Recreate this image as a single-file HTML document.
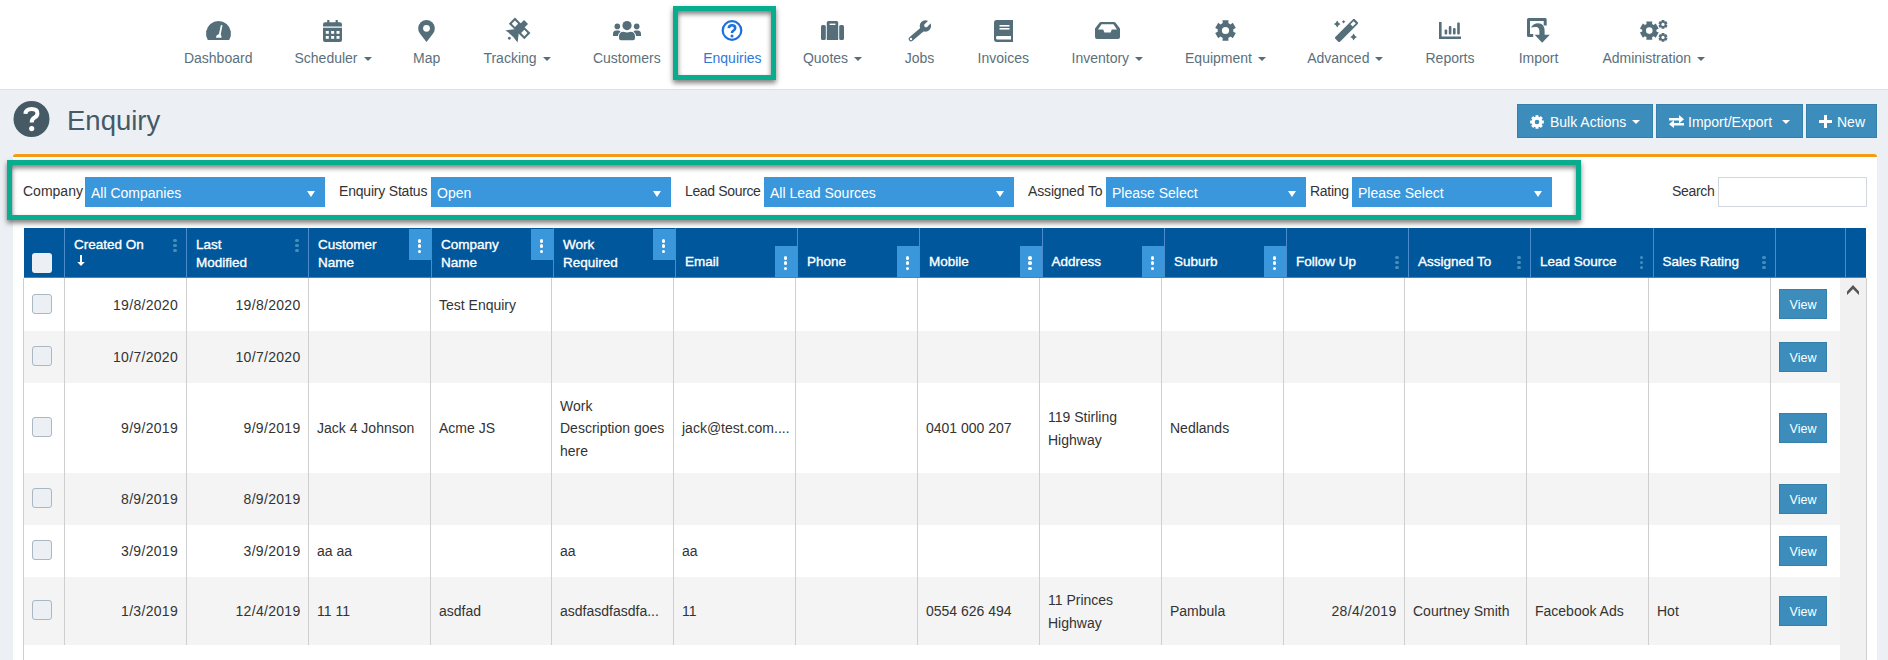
<!DOCTYPE html><html><head><meta charset="utf-8"><style>
*{box-sizing:border-box;margin:0;padding:0}
html,body{width:1888px;height:660px;overflow:hidden;background:#ecf0f5;font-family:"Liberation Sans",sans-serif;color:#333}
.a{position:absolute}
.nav{position:absolute;left:0;top:0;width:1888px;height:90px;background:#fff;border-bottom:1px solid #dde1e6}
.ni{position:absolute;top:0;width:160px;height:89px;text-align:center}
.ni svg{position:absolute}
svg{overflow:visible}
.nl{position:absolute;left:0;width:160px;top:50px;line-height:16px;font-size:14px;color:#5b707c;text-align:center;white-space:nowrap}
.caret{display:inline-block;width:0;height:0;border-left:4px solid transparent;border-right:4px solid transparent;border-top:4px solid #546e7a;vertical-align:2px;margin-left:6px}
.btn{position:absolute;top:104px;height:34px;background:#3c8dbc;border:1px solid #367fa9;color:#fff;font-size:14px;line-height:34px;white-space:nowrap}
.lbl{position:absolute;font-size:14px;color:#333;line-height:16px;top:183px;white-space:nowrap}
.sel{position:absolute;top:177px;height:30px;background:#3a97dc;color:#fff;font-size:14px;line-height:33px;padding-left:6px;white-space:nowrap}
.sel i{position:absolute;right:10px;top:14px;width:0;height:0;border-left:4px solid transparent;border-right:4px solid transparent;border-top:6px solid #fff}
.th{position:absolute;top:228px;height:49px;color:#fff;font-size:13.5px;font-weight:400;-webkit-text-stroke:0.35px #fff;line-height:18px;white-space:nowrap}
.hd{position:absolute;top:228px;width:1px;height:49px;background:#4d8ccc}
.kb{position:absolute;width:22px;height:31px;background:#3a97dc}
.dot{position:absolute;width:3.7px;height:3.7px;border-radius:50%;background:#fff}
.dd{background:#4590ba;width:3.4px;height:3.4px}
.row{position:absolute;left:24px;width:1816px}
.bd{position:absolute;width:1px;background:#cfcfcf;top:278px;height:367px}
.td{position:absolute;font-size:14px;color:#333;line-height:22.4px;white-space:nowrap}
.r{text-align:right}
.cb{position:absolute;left:32px;width:20px;height:20px;border:1px solid #a9b8c2;border-radius:3px;background:#eceff3}
.vb{position:absolute;left:1779px;width:48px;height:30px;background:#3c8dbc;border:1px solid #367fa9;color:#fff;font-size:12.5px;line-height:30px;text-align:center}
</style></head><body>
<div class="nav"></div>
<svg class="a" style="left:206px;top:21px" width="25" height="19" viewBox="0 0 25 19"><path fill="#546e7a" d="M1.82,19 A12.5,12.5 0 1 1 23.18,19 Z"/><path fill="#fff" d="M14.9,4 L16.5,4.3 L14.7,13.4 Q15.7,14.5 15.5,16.8 L10.1,16.8 Q9.8,14.2 12.9,13 Z"/></svg>
<div class="nl" style="left:138.2px">Dashboard</div>
<svg class="a" style="left:323px;top:20px" width="19" height="22" viewBox="0 0 19 22"><path fill="#546e7a" d="M0,6.6 L0,4.5 Q0,2.3 2.2,2.3 L16.8,2.3 Q19,2.3 19,4.5 L19,6.6 Z"/><path fill="#546e7a" d="M0,7.7 L19,7.7 L19,20 Q19,22 17,22 L2,22 Q0,22 0,20 Z"/><rect x="4.2" y="0" width="2.2" height="3" fill="#546e7a"/><rect x="12.6" y="0" width="2.2" height="3" fill="#546e7a"/><rect x="2.80" y="11.0" width="3" height="2.8" fill="#fff"/><rect x="8.15" y="11.0" width="3" height="2.8" fill="#fff"/><rect x="13.50" y="11.0" width="3" height="2.8" fill="#fff"/><rect x="2.80" y="16.0" width="3" height="2.8" fill="#fff"/><rect x="8.15" y="16.0" width="3" height="2.8" fill="#fff"/><rect x="13.50" y="16.0" width="3" height="2.8" fill="#fff"/></svg>
<div class="nl" style="left:253px">Scheduler<span class="caret"></span></div>
<svg class="a" style="left:418px;top:20px" width="17" height="22" viewBox="0 0 17 22"><path fill="#546e7a" d="M8.5,22 L1.9,13.4 A8.3,8.3 0 1 1 15.1,13.4 Z"/><circle cx="8.5" cy="8.3" r="3.4" fill="#fff"/></svg>
<div class="nl" style="left:346.7px">Map</div>
<svg class="a" style="left:506px;top:20px" width="22" height="22" viewBox="0 0 22 22"><g transform="translate(11 11) rotate(45)"><rect x="-2.8" y="-12.8" width="5.6" height="13.2" fill="#546e7a"/><rect x="-9.9" y="-7" width="6.6" height="6.6" fill="none" stroke="#546e7a" stroke-width="2.1"/><rect x="3.3" y="-7" width="6.6" height="6.6" fill="none" stroke="#546e7a" stroke-width="2.1"/><path fill="#546e7a" d="M-2,-0.8 L2,-0.8 L8.6,7.8 Q0,5.8 -8.6,7.8 Z"/><circle cx="-0.3" cy="10.5" r="1.4" fill="#546e7a"/></g></svg>
<div class="nl" style="left:437px">Tracking<span class="caret"></span></div>
<svg class="a" style="left:613px;top:21px" width="28" height="19" viewBox="0 0 28 19"><circle cx="14" cy="4.6" r="4.6" fill="#546e7a"/><circle cx="4.3" cy="5.4" r="2.8" fill="#546e7a"/><circle cx="23.7" cy="5.4" r="2.8" fill="#546e7a"/><path fill="#546e7a" d="M8,19.2 Q6,19.2 6,17 L6,15.5 Q6,10.8 10.5,10.8 Q12.5,11.6 14,11.6 Q15.5,11.6 17.5,10.8 Q22,10.8 22,15.5 L22,17 Q22,19.2 20,19.2 Z"/><path fill="#546e7a" d="M0,15 L0,13 Q0,9.5 3,9.5 L6,9.5 Q7,9.8 7.5,10.6 Q5.2,12.5 5,15 Z"/><path fill="#546e7a" d="M28,15 L28,13 Q28,9.5 25,9.5 L22,9.5 Q21,9.8 20.5,10.6 Q22.8,12.5 23,15 Z"/></svg>
<div class="nl" style="left:546.8px">Customers</div>
<svg class="a" style="left:721px;top:20px" width="22" height="21" viewBox="0 0 22 21"><circle cx="11" cy="10.5" r="9.3" fill="none" stroke="#1b72dc" stroke-width="2.2"/><path fill="none" stroke="#1b72dc" stroke-width="2.6" d="M7.8,8.2 Q8,5.2 11,5.2 Q14.2,5.2 14.2,8 Q14.2,9.8 12.2,10.8 Q11,11.4 11,13"/><circle cx="11" cy="15.9" r="1.5" fill="#1b72dc"/></svg>
<div class="nl" style="left:652.4px;color:#3078d8">Enquiries</div>
<svg class="a" style="left:821px;top:21px" width="23" height="19" viewBox="0 0 23 19"><rect x="0" y="4" width="4.8" height="15" rx="1.6" fill="#546e7a"/><rect x="18.2" y="4" width="4.8" height="15" rx="1.6" fill="#546e7a"/><path fill="#546e7a" d="M5.8,19 L5.8,1.6 Q5.8,0 7.4,0 L15.6,0 Q17.2,0 17.2,1.6 L17.2,19 Z"/><rect x="8.6" y="2.6" width="5.8" height="1.4" fill="#fff"/></svg>
<div class="nl" style="left:752.5px">Quotes<span class="caret"></span></div>
<svg class="a" style="left:908px;top:20px" width="23" height="22" viewBox="0 0 23 22"><line x1="16.5" y1="7.5" x2="3" y2="19" stroke="#546e7a" stroke-width="4.8" stroke-linecap="round"/><circle cx="17.4" cy="6" r="5.7" fill="#546e7a"/><g transform="translate(18 5.4) rotate(-45)"><rect x="0" y="-1.8" width="8" height="3.6" fill="#fff"/><circle cx="0" cy="0" r="1.8" fill="#fff"/></g><circle cx="3" cy="19" r="1.2" fill="#fff"/></svg>
<div class="nl" style="left:839.5px">Jobs</div>
<svg class="a" style="left:994px;top:20px" width="19" height="22" viewBox="0 0 19 22"><path fill="#546e7a" d="M2.5,0 L19,0 L19,22 L2.5,22 Q0,22 0,19 L0,2.8 Q0,0 2.5,0 Z"/><rect x="5.5" y="5" width="10" height="1.6" fill="#fff"/><rect x="5.5" y="8" width="10" height="1.6" fill="#fff"/><path fill="#fff" d="M3,16 L17,16 L17,19.5 L3,19.5 Q2,19.5 2,17.8 Q2,16 3,16 Z"/></svg>
<div class="nl" style="left:923.3px">Invoices</div>
<svg class="a" style="left:1095px;top:22px" width="25" height="17" viewBox="0 0 25 17"><path fill="#546e7a" d="M6,0 L19,0 Q20,0 20.6,0.8 L25,6.4 L25,15 Q25,17 23,17 L2,17 Q0,17 0,15 L0,6.4 L4.4,0.8 Q5,0 6,0 Z"/><path fill="#fff" d="M6.6,2.2 L18.4,2.2 L22,7.6 L16.8,7.6 L15.6,10.4 L9.4,10.4 L8.2,7.6 L3,7.6 Z"/></svg>
<div class="nl" style="left:1027.3px">Inventory<span class="caret"></span></div>
<svg class="a" style="left:1215px;top:20px" width="21" height="21" viewBox="0 0 21 21"><path fill="#546e7a" d="M13.28,17.89 L13.51,20.66 L7.49,20.66 L7.72,17.89 L5.49,16.61 L3.20,18.19 L0.19,12.97 L2.71,11.79 L2.71,9.21 L0.19,8.03 L3.20,2.81 L5.49,4.39 L7.72,3.11 L7.49,0.34 L13.51,0.34 L13.28,3.11 L15.51,4.39 L17.80,2.81 L20.81,8.03 L18.29,9.21 L18.29,11.79 L20.81,12.97 L17.80,18.19 L15.51,16.61Z"/><circle cx="10.5" cy="10.5" r="3.6" fill="#fff"/></svg>
<div class="nl" style="left:1145.5px">Equipment<span class="caret"></span></div>
<svg class="a" style="left:1334px;top:20px" width="23" height="22" viewBox="0 0 23 22"><g transform="translate(12.2 10.8) rotate(45)"><rect x="-3.3" y="-14.2" width="6.6" height="27.5" rx="1.2" fill="#546e7a"/><rect x="-1.6" y="-12" width="3.2" height="4.4" fill="#fff"/></g><path fill="#546e7a" d="M3.2,0.6000000000000001 Q4.152,3.048 6.6,4 Q4.152,4.952 3.2,7.4 Q2.248,4.952 -0.19999999999999973,4 Q2.248,3.048 3.2,0.6000000000000001 Z M9.6,0.0 Q10.104,1.2959999999999998 11.4,1.8 Q10.104,2.3040000000000003 9.6,3.6 Q9.096,2.3040000000000003 7.8,1.8 Q9.096,1.2959999999999998 9.6,0.0 Z M19.6,13.6 Q20.552000000000003,16.048 23.0,17 Q20.552000000000003,17.952 19.6,20.4 Q18.648,17.952 16.200000000000003,17 Q18.648,16.048 19.6,13.6 Z"/></svg>
<div class="nl" style="left:1265.3px">Advanced<span class="caret"></span></div>
<svg class="a" style="left:1439px;top:22px" width="22" height="17" viewBox="0 0 22 17"><path fill="#546e7a" d="M0,0 L2.6,0 L2.6,14.4 L22,14.4 L22,17 L0,17 Z"/><rect x="5.6" y="7.5" width="2.6" height="5" rx="1" fill="#546e7a"/><rect x="9.8" y="4" width="2.6" height="8.5" rx="1" fill="#546e7a"/><rect x="14" y="6" width="2.6" height="6.5" rx="1" fill="#546e7a"/><rect x="18.2" y="0.5" width="2.6" height="12" rx="1" fill="#546e7a"/></svg>
<div class="nl" style="left:1370px">Reports</div>
<svg class="a" style="left:1527px;top:18px" width="23" height="25" viewBox="0 0 23 25"><path fill="none" stroke="#546e7a" stroke-width="3" stroke-linejoin="round" d="M6.2,17.6 L1.5,17.6 L1.5,1.6 L18.2,1.6 L18.2,7.6"/><path fill="#546e7a" d="M3.8,9.6 Q6.5,5.2 11.2,5.2 Q17.6,5.4 17.6,13 L17.6,17.4 L12.4,17.4 L12.4,13.2 Q12.4,9.2 9.2,9 Q6.4,8.8 3.8,9.6 Z"/><path fill="#546e7a" d="M7.6,16.8 L22.8,16.8 L15.2,24.8 Z"/></svg>
<div class="nl" style="left:1458.5px">Import</div>
<svg class="a" style="left:1640px;top:20px" width="28" height="22" viewBox="0 0 28 22"><path fill="#546e7a" d="M12.06,17.25 L12.27,19.73 L6.33,19.73 L6.54,17.25 L4.92,16.31 L2.88,17.73 L-0.09,12.60 L2.16,11.54 L2.16,9.66 L-0.09,8.60 L2.88,3.47 L4.92,4.89 L6.54,3.95 L6.33,1.47 L12.27,1.47 L12.06,3.95 L13.68,4.89 L15.72,3.47 L18.69,8.60 L16.44,9.66 L16.44,11.54 L18.69,12.60 L15.72,17.73 L13.68,16.31Z"/><circle cx="9.3" cy="10.6" r="3.3" fill="#fff"/><path fill="#546e7a" d="M24.34,7.63 L24.45,8.87 L21.55,8.87 L21.66,7.63 L20.87,7.18 L19.86,7.89 L18.40,5.38 L19.53,4.86 L19.53,3.94 L18.40,3.42 L19.86,0.91 L20.87,1.62 L21.66,1.17 L21.55,-0.07 L24.45,-0.07 L24.34,1.17 L25.13,1.62 L26.14,0.91 L27.60,3.42 L26.47,3.94 L26.47,4.86 L27.60,5.38 L26.14,7.89 L25.13,7.18Z"/><circle cx="23" cy="4.4" r="1.6" fill="#fff"/><path fill="#546e7a" d="M24.34,20.63 L24.45,21.87 L21.55,21.87 L21.66,20.63 L20.87,20.18 L19.86,20.89 L18.40,18.38 L19.53,17.86 L19.53,16.94 L18.40,16.42 L19.86,13.91 L20.87,14.62 L21.66,14.17 L21.55,12.93 L24.45,12.93 L24.34,14.17 L25.13,14.62 L26.14,13.91 L27.60,16.42 L26.47,16.94 L26.47,17.86 L27.60,18.38 L26.14,20.89 L25.13,20.18Z"/><circle cx="23" cy="17.4" r="1.6" fill="#fff"/></svg>
<div class="nl" style="left:1573.8px">Administration<span class="caret"></span></div>
<div class="a" style="left:673px;top:6px;width:103px;height:74px;border:5px solid #08ad8d;box-shadow:0 3px 5px rgba(0,0,0,.5), inset 0 3px 5px rgba(0,0,0,.5)"></div>
<svg class="a" style="left:13px;top:101px" width="37" height="36" viewBox="0 0 37 36"><circle cx="18.5" cy="18" r="18" fill="#455a64"/><path fill="none" stroke="#fff" stroke-width="4" d="M12.4,12.8 Q12.8,8 18.6,8 Q24.4,8 24.4,12.4 Q24.4,15 21.6,16.6 Q18.7,18.2 18.7,21.4"/><circle cx="18.7" cy="27.6" r="2.6" fill="#fff"/></svg>
<div class="a" style="left:67px;top:105px;font-size:27.5px;line-height:32px;color:#455a64;white-space:nowrap">Enquiry</div>
<div class="btn" style="left:1517px;width:136px"><svg class="a" style="left:12px;top:10px" width="14" height="14" viewBox="0 0 14 14"><path fill="#fff" d="M12.20,5.56 L13.84,5.50 L13.84,8.50 L12.20,8.44 L11.70,9.66 L12.90,10.77 L10.77,12.90 L9.66,11.70 L8.44,12.20 L8.50,13.84 L5.50,13.84 L5.56,12.20 L4.34,11.70 L3.23,12.90 L1.10,10.77 L2.30,9.66 L1.80,8.44 L0.16,8.50 L0.16,5.50 L1.80,5.56 L2.30,4.34 L1.10,3.23 L3.23,1.10 L4.34,2.30 L5.56,1.80 L5.50,0.16 L8.50,0.16 L8.44,1.80 L9.66,2.30 L10.77,1.10 L12.90,3.23 L11.70,4.34Z"/><circle cx="7" cy="7" r="2.3" fill="#3c8dbc"/></svg><span class="a" style="left:32px;top:0">Bulk Actions</span><span class="a" style="left:114px;top:15px;width:0;height:0;border-left:4px solid transparent;border-right:4px solid transparent;border-top:4px solid #fff"></span></div>
<div class="btn" style="left:1656px;width:147px"><svg class="a" style="left:12px;top:10px" width="15" height="13" viewBox="0 0 15 13"><path fill="#fff" d="M0,3 L10,3 L10,0 L15,4.2 L10,8.4 L10,5.4 L0,5.4 Z"/><path fill="#fff" d="M15,8 L5,8 L5,5 L0,9.2 L5,13 L5,10.4 L15,10.4 Z"/></svg><span class="a" style="left:31px;top:0">Import/Export</span><span class="a" style="left:125px;top:15px;width:0;height:0;border-left:4px solid transparent;border-right:4px solid transparent;border-top:4px solid #fff"></span></div>
<div class="btn" style="left:1806px;width:71px"><svg class="a" style="left:12px;top:10px" width="13" height="13" viewBox="0 0 13 13"><rect x="5" y="0" width="3" height="13" fill="#fff"/><rect x="0" y="5" width="13" height="3" fill="#fff"/></svg><span class="a" style="left:30px;top:0">New</span></div>
<div class="a" style="left:13px;top:154px;width:1864px;height:520px;background:#fff;border-top:3px solid #f39c12;border-radius:3px 3px 0 0"></div>
<div class="lbl" style="left:23px">Company</div>
<div class="sel" style="left:85px;width:240px">All Companies<i></i></div>
<div class="lbl" style="left:339px;letter-spacing:-0.2px">Enquiry Status</div>
<div class="sel" style="left:431px;width:240px">Open<i></i></div>
<div class="lbl" style="left:685px;letter-spacing:-0.35px">Lead Source</div>
<div class="sel" style="left:764px;width:250px">All Lead Sources<i></i></div>
<div class="lbl" style="left:1028px;letter-spacing:-0.15px">Assigned To</div>
<div class="sel" style="left:1106px;width:200px">Please Select<i></i></div>
<div class="lbl" style="left:1310px;letter-spacing:-0.3px">Rating</div>
<div class="sel" style="left:1352px;width:200px">Please Select<i></i></div>
<div class="lbl" style="left:1672px;letter-spacing:-0.3px">Search</div>
<div class="a" style="left:1718px;top:177px;width:149px;height:30px;border:1px solid #d2d6de;background:#fff"></div>
<div class="a" style="left:7px;top:160px;width:1574px;height:60px;border:5px solid #08ad8d;box-shadow:0 3px 5px rgba(0,0,0,.5), inset 0 3px 5px rgba(0,0,0,.5)"></div>
<div class="a" style="left:24px;top:228px;width:1842px;height:49px;background:#01579b"></div>
<div class="a" style="left:24px;top:277px;width:1842px;height:1px;background:#3f86cf"></div>
<div class="hd" style="left:64.0px"></div>
<div class="hd" style="left:186.0px"></div>
<div class="hd" style="left:308.0px"></div>
<div class="hd" style="left:431.0px"></div>
<div class="hd" style="left:553.0px"></div>
<div class="hd" style="left:675.0px"></div>
<div class="hd" style="left:797.0px"></div>
<div class="hd" style="left:919.0px"></div>
<div class="hd" style="left:1041.5px"></div>
<div class="hd" style="left:1164.0px"></div>
<div class="hd" style="left:1286.0px"></div>
<div class="hd" style="left:1408.0px"></div>
<div class="hd" style="left:1530.0px"></div>
<div class="hd" style="left:1652.5px"></div>
<div class="hd" style="left:1775.0px"></div>
<div class="hd" style="left:1845.0px"></div>
<div class="a" style="left:32px;top:253px;width:20px;height:20px;border-radius:3px;background:#eceff3"></div>
<div class="th" style="left:74.0px;top:236px;height:auto">Created On<br>&nbsp;</div>
<div class="dot dd" style="left:173.29999999999998px;top:238.6px"></div>
<div class="dot dd" style="left:173.29999999999998px;top:243.6px"></div>
<div class="dot dd" style="left:173.29999999999998px;top:248.6px"></div>
<div class="th" style="left:196.0px;top:236px;height:auto">Last<br>Modified</div>
<div class="dot dd" style="left:295.3px;top:238.6px"></div>
<div class="dot dd" style="left:295.3px;top:243.6px"></div>
<div class="dot dd" style="left:295.3px;top:248.6px"></div>
<div class="th" style="left:318.0px;top:236px;height:auto">Customer<br>Name</div>
<div class="kb" style="left:409.0px;top:229px"></div>
<div class="dot" style="left:417.7px;top:239.0px"></div>
<div class="dot" style="left:417.7px;top:244.3px"></div>
<div class="dot" style="left:417.7px;top:249.6px"></div>
<div class="th" style="left:441.0px;top:236px;height:auto">Company<br>Name</div>
<div class="kb" style="left:531.0px;top:229px"></div>
<div class="dot" style="left:539.7px;top:239.0px"></div>
<div class="dot" style="left:539.7px;top:244.3px"></div>
<div class="dot" style="left:539.7px;top:249.6px"></div>
<div class="th" style="left:563.0px;top:236px;height:auto">Work<br>Required</div>
<div class="kb" style="left:653.0px;top:229px"></div>
<div class="dot" style="left:661.7px;top:239.0px"></div>
<div class="dot" style="left:661.7px;top:244.3px"></div>
<div class="dot" style="left:661.7px;top:249.6px"></div>
<div class="th" style="left:685.0px;top:253px;height:auto">Email</div>
<div class="kb" style="left:775.0px;top:246px"></div>
<div class="dot" style="left:783.7px;top:256.0px"></div>
<div class="dot" style="left:783.7px;top:261.3px"></div>
<div class="dot" style="left:783.7px;top:266.6px"></div>
<div class="th" style="left:807.0px;top:253px;height:auto">Phone</div>
<div class="kb" style="left:897.0px;top:246px"></div>
<div class="dot" style="left:905.7px;top:256.0px"></div>
<div class="dot" style="left:905.7px;top:261.3px"></div>
<div class="dot" style="left:905.7px;top:266.6px"></div>
<div class="th" style="left:929.0px;top:253px;height:auto">Mobile</div>
<div class="kb" style="left:1019.5px;top:246px"></div>
<div class="dot" style="left:1028.2px;top:256.0px"></div>
<div class="dot" style="left:1028.2px;top:261.3px"></div>
<div class="dot" style="left:1028.2px;top:266.6px"></div>
<div class="th" style="left:1051.5px;top:253px;height:auto">Address</div>
<div class="kb" style="left:1142.0px;top:246px"></div>
<div class="dot" style="left:1150.7px;top:256.0px"></div>
<div class="dot" style="left:1150.7px;top:261.3px"></div>
<div class="dot" style="left:1150.7px;top:266.6px"></div>
<div class="th" style="left:1174.0px;top:253px;height:auto">Suburb</div>
<div class="kb" style="left:1264.0px;top:246px"></div>
<div class="dot" style="left:1272.7px;top:256.0px"></div>
<div class="dot" style="left:1272.7px;top:261.3px"></div>
<div class="dot" style="left:1272.7px;top:266.6px"></div>
<div class="th" style="left:1296.0px;top:253px;height:auto">Follow Up</div>
<div class="dot dd" style="left:1395.3px;top:255.6px"></div>
<div class="dot dd" style="left:1395.3px;top:260.6px"></div>
<div class="dot dd" style="left:1395.3px;top:265.6px"></div>
<div class="th" style="left:1418.0px;top:253px;height:auto">Assigned To</div>
<div class="dot dd" style="left:1517.3px;top:255.6px"></div>
<div class="dot dd" style="left:1517.3px;top:260.6px"></div>
<div class="dot dd" style="left:1517.3px;top:265.6px"></div>
<div class="th" style="left:1540.0px;top:253px;height:auto">Lead Source</div>
<div class="dot dd" style="left:1639.8px;top:255.6px"></div>
<div class="dot dd" style="left:1639.8px;top:260.6px"></div>
<div class="dot dd" style="left:1639.8px;top:265.6px"></div>
<div class="th" style="left:1662.5px;top:253px;height:auto">Sales Rating</div>
<div class="dot dd" style="left:1762.3px;top:255.6px"></div>
<div class="dot dd" style="left:1762.3px;top:260.6px"></div>
<div class="dot dd" style="left:1762.3px;top:265.6px"></div>
<svg class="a" style="left:77px;top:254px" width="8" height="12" viewBox="0 0 8 12"><rect x="3" y="1" width="2" height="8" fill="#fff"/><path fill="#fff" d="M0.3,8 L7.8,8 L4,12 Z"/></svg>
<div class="row" style="top:278px;height:53px;background:#fff"></div>
<div class="row" style="top:331px;height:52px;background:#f4f4f4"></div>
<div class="row" style="top:383px;height:90px;background:#fff"></div>
<div class="row" style="top:473px;height:52px;background:#f4f4f4"></div>
<div class="row" style="top:525px;height:52px;background:#fff"></div>
<div class="row" style="top:577px;height:68px;background:#f4f4f4"></div>
<div class="bd" style="left:63.5px"></div>
<div class="bd" style="left:185.5px"></div>
<div class="bd" style="left:308.0px"></div>
<div class="bd" style="left:430.0px"></div>
<div class="bd" style="left:551.0px"></div>
<div class="bd" style="left:673.0px"></div>
<div class="bd" style="left:795.0px"></div>
<div class="bd" style="left:917.0px"></div>
<div class="bd" style="left:1039.0px"></div>
<div class="bd" style="left:1161.0px"></div>
<div class="bd" style="left:1283.0px"></div>
<div class="bd" style="left:1404.0px"></div>
<div class="bd" style="left:1526.0px"></div>
<div class="bd" style="left:1648.0px"></div>
<div class="bd" style="left:1770.0px"></div>
<div class="a" style="left:23px;top:278px;width:1px;height:400px;background:#cfcfcf"></div>
<div class="a" style="left:1866px;top:278px;width:1px;height:400px;background:#cfcfcf"></div>
<div class="a" style="left:1840px;top:278px;width:26px;height:400px;background:#f1f1f1"></div>
<svg class="a" style="left:1847px;top:285px" width="12" height="10" viewBox="0 0 12 10"><path fill="#555" d="M6,0 L12,6.5 L12,10 L6,4 L0,10 L0,6.5 Z"/></svg>
<div class="cb" style="top:293.5px"></div>
<div class="vb" style="top:289.0px">View</div>
<div class="td r" style="left:64px;width:114px;letter-spacing:0.3px;top:293.8px">19/8/2020</div>
<div class="td r" style="left:186px;width:114.5px;letter-spacing:0.3px;top:293.8px">19/8/2020</div>
<div class="td" style="left:439.0px;top:293.8px">Test Enquiry</div>
<div class="cb" style="top:346.0px"></div>
<div class="vb" style="top:341.5px">View</div>
<div class="td r" style="left:64px;width:114px;letter-spacing:0.3px;top:346.3px">10/7/2020</div>
<div class="td r" style="left:186px;width:114.5px;letter-spacing:0.3px;top:346.3px">10/7/2020</div>
<div class="cb" style="top:417.0px"></div>
<div class="vb" style="top:412.5px">View</div>
<div class="td r" style="left:64px;width:114px;letter-spacing:0.3px;top:417.3px">9/9/2019</div>
<div class="td r" style="left:186px;width:114.5px;letter-spacing:0.3px;top:417.3px">9/9/2019</div>
<div class="td" style="left:317.0px;top:417.3px">Jack 4 Johnson</div>
<div class="td" style="left:439.0px;top:417.3px">Acme JS</div>
<div class="td" style="left:560.0px;top:394.9px">Work<br>Description goes<br>here</div>
<div class="td" style="left:682.0px;top:417.3px">jack@test.com....</div>
<div class="td" style="left:926.0px;top:417.3px">0401 000 207</div>
<div class="td" style="left:1048.0px;top:406.1px">119 Stirling<br>Highway</div>
<div class="td" style="left:1170.0px;top:417.3px">Nedlands</div>
<div class="cb" style="top:488.0px"></div>
<div class="vb" style="top:483.5px">View</div>
<div class="td r" style="left:64px;width:114px;letter-spacing:0.3px;top:488.3px">8/9/2019</div>
<div class="td r" style="left:186px;width:114.5px;letter-spacing:0.3px;top:488.3px">8/9/2019</div>
<div class="cb" style="top:540.0px"></div>
<div class="vb" style="top:535.5px">View</div>
<div class="td r" style="left:64px;width:114px;letter-spacing:0.3px;top:540.3px">3/9/2019</div>
<div class="td r" style="left:186px;width:114.5px;letter-spacing:0.3px;top:540.3px">3/9/2019</div>
<div class="td" style="left:317.0px;top:540.3px">aa aa</div>
<div class="td" style="left:560.0px;top:540.3px">aa</div>
<div class="td" style="left:682.0px;top:540.3px">aa</div>
<div class="cb" style="top:600.0px"></div>
<div class="vb" style="top:595.5px">View</div>
<div class="td r" style="left:64px;width:114px;letter-spacing:0.3px;top:600.3px">1/3/2019</div>
<div class="td r" style="left:186px;width:114.5px;letter-spacing:0.3px;top:600.3px">12/4/2019</div>
<div class="td" style="left:317.0px;top:600.3px">11 11</div>
<div class="td" style="left:439.0px;top:600.3px">asdfad</div>
<div class="td" style="left:560.0px;top:600.3px">asdfasdfasdfa...</div>
<div class="td" style="left:682.0px;top:600.3px">11</div>
<div class="td" style="left:926.0px;top:600.3px">0554 626 494</div>
<div class="td" style="left:1048.0px;top:589.1px">11 Princes<br>Highway</div>
<div class="td" style="left:1170.0px;top:600.3px">Pambula</div>
<div class="td r" style="left:1283.5px;width:113.0px;letter-spacing:0.3px;top:600.3px">28/4/2019</div>
<div class="td" style="left:1413.0px;top:600.3px">Courtney Smith</div>
<div class="td" style="left:1535.0px;top:600.3px">Facebook Ads</div>
<div class="td" style="left:1657.0px;top:600.3px">Hot</div>
</body></html>
